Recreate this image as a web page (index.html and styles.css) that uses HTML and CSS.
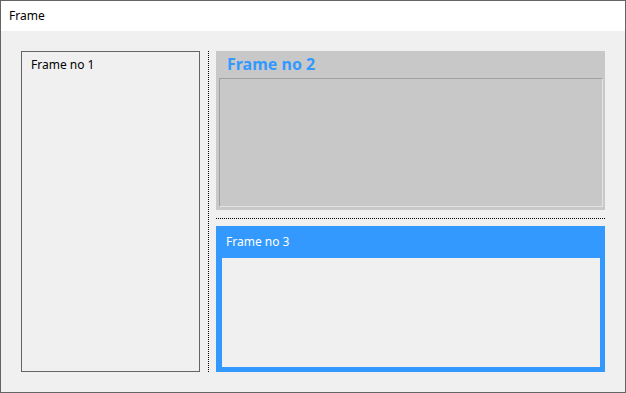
FILE: index.html
```html
<!DOCTYPE html>
<html lang="en">
<head>
  <meta charset="UTF-8">
  <title>Frame</title>
  <link rel="stylesheet" href="styles.css">
</head>
<body>
  <div class="window">
    <div class="titlebar">Frame</div>
    <div class="content">
      <div class="frame-one">
        <span class="frame-one-title">Frame no 1</span>
      </div>
      <div class="right-column">
        <div class="frame-two">
          <div class="frame-two-title">Frame no 2</div>
          <div class="frame-two-body"></div>
        </div>
        <div class="frame-three">
          <div class="frame-three-title">Frame no 3</div>
          <div class="frame-three-body"></div>
        </div>
      </div>
    </div>
  </div>
</body>
</html>
```

FILE: styles.css
```css
* {
  box-sizing: border-box;
}

body {
  margin: 0;
  font-family: "Noto Sans", "Open Sans", sans-serif;
  font-size: 12px;
  color: #000;
  background-color: #f0f0f0;
}

.window {
  width: 626px;
  height: 393px;
  border: 1px solid #646464;
  display: flex;
  flex-direction: column;
  background-color: #f0f0f0;
}

.titlebar {
  height: 30px;
  background-color: #ffffff;
  padding-left: 8px;
  line-height: 30px;
}

.content {
  flex: 1;
  display: flex;
  padding: 20px;
}

.frame-one {
  width: 179px;
  border: 1px solid #646464;
  padding: 4px 9px;
}

.right-column {
  flex: 1;
  display: flex;
  flex-direction: column;
  margin-left: 8px;
  padding-left: 7px;
  border-left: 1px dotted #000;
}

.frame-two {
  height: 159px;
  background-color: #c8c8c8;
  display: flex;
  flex-direction: column;
  padding: 0 2px 3px 3px;
}

.frame-two-title {
  height: 27px;
  padding-left: 8px;
  color: #3399ff;
  font-weight: bold;
  font-size: 16px;
  line-height: 26px;
}

.frame-two-body {
  flex: 1;
  border-top: 1px solid #a0a0a0;
  border-left: 1px solid #a0a0a0;
  border-right: 1px solid #e3e3e3;
  border-bottom: 1px solid #e3e3e3;
}

.frame-three {
  flex: 1;
  margin-top: 8px;
  padding-top: 7px;
  border-top: 1px dotted #000;
  display: flex;
  flex-direction: column;
}

.frame-three-title {
  height: 32px;
  background-color: #3399ff;
  color: #ffffff;
  padding-left: 10px;
  line-height: 32px;
}

.frame-three-body {
  flex: 1;
  background-color: #f0f0f0;
  border-left: 6px solid #3399ff;
  border-right: 5px solid #3399ff;
  border-bottom: 5px solid #3399ff;
}
```
